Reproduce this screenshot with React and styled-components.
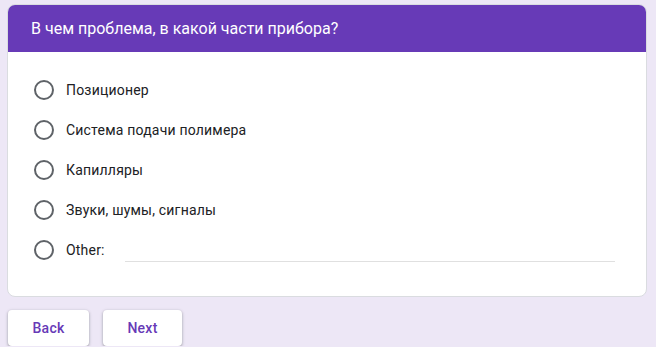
import React from "react";
import styled, { createGlobalStyle } from "styled-components";

const Global = createGlobalStyle`
  html, body { margin: 0; padding: 0; background: #ede7f6; }
  body { font-family: Roboto, "Noto Sans", Arial, sans-serif; }
`;

const Page = styled.div`
  display: flex;
  flex-direction: column;
  padding: 4px 9px 0 7px;
  gap: 13px;
`;

const Card = styled.div`
  background: #fff;
  border: 1px solid #dadce0;
  border-radius: 8px;
  overflow: hidden;
  width: 640px;
  box-sizing: border-box;
`;

const Header = styled.div`
  background: #673ab7;
  color: #fff;
  height: 48px;
  display: flex;
  align-items: center;
  padding: 0 24px;
  font-size: 16px;
  margin: -1px -1px 0 -1px;
`;

const Options = styled.div`
  display: flex;
  flex-direction: column;
  padding: 18px 31px 26px 25px;
`;

const Row = styled.label`
  display: flex;
  align-items: center;
  height: 40px;
  font-size: 14px;
  letter-spacing: 0.2px;
  color: #202124;
`;

const Radio = styled.span`
  width: 20px;
  height: 20px;
  box-sizing: border-box;
  border: 2px solid #5f6368;
  border-radius: 50%;
  margin-left: 1px;
  margin-right: 12px;
  flex: none;
`;

const OtherInput = styled.span`
  flex: 1;
  margin-left: 20px;
  align-self: flex-end;
  margin-bottom: 8px;
  border-bottom: 1px solid #e0e0e0;
  height: 1px;
`;

const Buttons = styled.div`
  display: flex;
  gap: 14px;
  padding-left: 1px;
`;

const Button = styled.button`
  height: 36px;
  width: ${(p) => p.$w}px;
  background: #fff;
  border: none;
  border-radius: 4px;
  box-shadow: 0 1px 2px rgba(60, 64, 67, 0.3), 0 1px 3px 1px rgba(60, 64, 67, 0.15);
  color: #673ab7;
  font-family: Roboto, Arial, sans-serif;
  font-weight: 500;
  font-size: 14px;
  letter-spacing: 0.25px;
  padding: 0;
`;

const options = [
  "Позиционер",
  "Система подачи полимера",
  "Капилляры",
  "Звуки, шумы, сигналы",
];

export default function App() {
  return (
    <>
      <Global />
      <Page>
        <Card>
          <Header>В чем проблема, в какой части прибора?</Header>
          <Options>
            {options.map((o) => (
              <Row key={o}>
                <Radio />
                {o}
              </Row>
            ))}
            <Row>
              <Radio />
              Other:
              <OtherInput />
            </Row>
          </Options>
        </Card>
        <Buttons>
          <Button $w={81}>Back</Button>
          <Button $w={79}>Next</Button>
        </Buttons>
      </Page>
    </>
  );
}
